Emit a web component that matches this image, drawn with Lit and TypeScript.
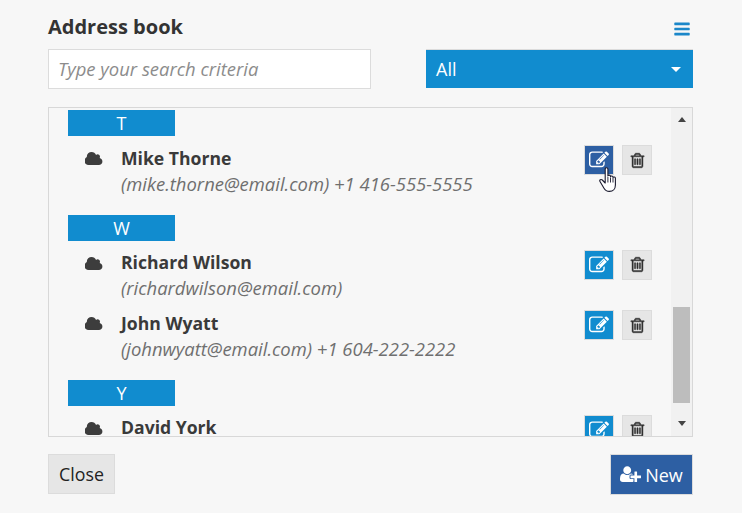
import { LitElement, html, css, svg } from "lit";
import { customElement } from "lit/decorators.js";

const icon = (vb: string, d: string, cls: string) =>
  html`<svg class=${cls} viewBox=${vb} aria-hidden="true">${svg`<path fill="currentColor" d=${d}></path>`}</svg>`;

const CLOUD = "M1856 1216q0 159-112.5 271.5t-271.5 112.5h-1088q-185 0-316.5-131.5t-131.5-316.5q0-132 71-241.5t187-163.5q-2-28-2-43 0-212 150-362t362-150q158 0 286.5 88t187.5 230q70-62 166-62 106 0 181 75t75 181q0 75-41 138 129 30 213 134.5t84 239.5z";
const BARS = "M1664 1344v128q0 26-19 45t-45 19h-1408q-26 0-45-19t-19-45v-128q0-26 19-45t45-19h1408q26 0 45 19t19 45zm0-512v128q0 26-19 45t-45 19h-1408q-26 0-45-19t-19-45v-128q0-26 19-45t45-19h1408q26 0 45 19t19 45zm0-512v128q0 26-19 45t-45 19h-1408q-26 0-45-19t-19-45v-128q0-26 19-45t45-19h1408q26 0 45 19t19 45z";
const EDIT = "M888 1184l116-116-152-152-116 116v56h96v96h56zm440-720q-16-16-33 1l-350 350q-17 17-1 33t33-1l350-350q17-17 1-33zm80 594v190q0 119-84.5 203.5t-203.5 84.5h-832q-119 0-203.5-84.5t-84.5-203.5v-832q0-119 84.5-203.5t203.5-84.5h832q63 0 117 25 15 7 18 23 3 17-9 29l-49 49q-14 14-32 8-23-6-45-6h-832q-66 0-113 47t-47 113v832q0 66 47 113t113 47h832q66 0 113-47t47-113v-126q0-13 9-22l64-64q15-15 35-7t20 29zm-96-738l288 288-672 672h-288v-288zm444 132l-92 92-288-288 92-92q28-28 68-28t68 28l152 152q28 28 28 68t-28 68z";
const TRASH = "M704 736v576q0 14-9 23t-23 9h-64q-14 0-23-9t-9-23v-576q0-14 9-23t23-9h64q14 0 23 9t9 23zm256 0v576q0 14-9 23t-23 9h-64q-14 0-23-9t-9-23v-576q0-14 9-23t23-9h64q14 0 23 9t9 23zm256 0v576q0 14-9 23t-23 9h-64q-14 0-23-9t-9-23v-576q0-14 9-23t23-9h64q14 0 23 9t9 23zm128 724v-948h-896v948q0 22 7 40.5t14.5 27 10.5 8.5h832q3 0 10.5-8.5t14.5-27 7-40.5zm-672-1076h448l-48-117q-7-9-17-11h-317q-10 2-17 11zm928 32v64q0 14-9 23t-23 9h-96v948q0 83-47 143.5t-113 60.5h-832q-66 0-113-58.5t-47-141.5v-952h-96q-14 0-23-9t-9-23v-64q0-14 9-23t23-9h309l70-167q15-37 54-63t79-26h320q40 0 79 26t54 63l70 167h309q14 0 23 9t9 23z";
const USERPLUS = "M704 896q-159 0-271.5-112.5t-112.5-271.5 112.5-271.5 271.5-112.5 271.5 112.5 112.5 271.5-112.5 271.5-271.5 112.5zm960 128h352q13 0 22.5 9.5t9.5 22.5v192q0 13-9.5 22.5t-22.5 9.5h-352v352q0 13-9.5 22.5t-22.5 9.5h-192q-13 0-22.5-9.5t-9.5-22.5v-352h-352q-13 0-22.5-9.5t-9.5-22.5v-192q0-13 9.5-22.5t22.5-9.5h352v-352q0-13 9.5-22.5t22.5-9.5h192q13 0 22.5 9.5t9.5 22.5v352zm-736 224q0 52 38 90t90 38h256v238q-68 50-171 50h-874q-121 0-194-69t-73-190q0-53 3.5-103.5t14-109 26.5-108.5 43-97.5 62-81 85.5-53.5 111.5-20q19 0 39 17 79 61 154.5 91.5t164.5 30.5 164.5-30.5 154.5-91.5q20-17 39-17 132 0 217 96h-223q-52 0-90 38t-38 90v192z";

type Contact = { name: string; detail: string; hover?: boolean };
const GROUPS: { letter: string; contacts: Contact[] }[] = [
  { letter: "T", contacts: [{ name: "Mike Thorne", detail: "(mike.thorne@email.com) +1 416-555-5555", hover: true }] },
  { letter: "W", contacts: [
    { name: "Richard Wilson", detail: "(richardwilson@email.com)" },
    { name: "John Wyatt", detail: "(johnwyatt@email.com) +1 604-222-2222" },
  ] },
  { letter: "Y", contacts: [{ name: "David York", detail: "" }] },
];

@customElement("app-root")
export class AppRoot extends LitElement {
  static styles = css`
    :host {
      display: block;
      width: 742px;
      height: 513px;
      overflow: hidden;
      background: #f7f7f7;
      font-family: "Open Sans", sans-serif;
      color: #3a3a3a;
      box-sizing: border-box;
      padding: 14px 49px 0 48px;
    }
    .head { display: flex; justify-content: space-between; align-items: center; height: 26px; }
    h1 { margin: 0; font-size: 20px; font-weight: 700; line-height: 26px; color: #333; }
    .bars { width: 18px; height: 18px; color: #1b87c9; margin: 3px 2px 0 0; }
    .filters { display: flex; justify-content: space-between; margin-top: 9px; }
    .search {
      box-sizing: border-box; width: 323px; height: 40px;
      border: 1px solid #dcdcdc; background: #fff;
      padding: 0 9px 2px; display: flex; align-items: center;
      font-size: 18.45px; font-style: italic; color: #8c8c8c;
    }
    .select {
      box-sizing: border-box; width: 267px; height: 39px;
      background: #118ccf; color: #fff; border-top: 1px solid #dcdcdc;
      padding: 0 12px 0 10px; display: flex; align-items: center; justify-content: space-between;
      font-size: 18px;
    }
    .caret { width: 0; height: 0; border-left: 5px solid transparent; border-right: 5px solid transparent; border-top: 5px solid #fff; }
    .box {
      box-sizing: border-box; margin-top: 18px; height: 330px;
      border: 1px solid #d8d8d8; display: flex; overflow: hidden;
    }
    .list { flex: 1; min-width: 0; padding: 2px 19px 0 19px; overflow: hidden; }
    .letter {
      width: 107px; height: 26px; background: #118ccf; color: #fff;
      font-size: 18px; line-height: 26px; text-align: center; margin-bottom: 9px;
    }
    .group { margin-bottom: 9px; }
    .row { display: flex; height: 60.5px; }
    .cloud { width: 18px; height: 17px; color: #3d3d3d; margin: 5px 0 0 17px; flex: none; }
    .info { flex: 1; margin: -0.3px 0 0 18px; min-width: 0; }
    .name { font-size: 17.6px; font-weight: 700; line-height: 26px; color: #3a3a3a; }
    .detail { font-size: 18.45px; font-style: italic; line-height: 26px; color: #6f6f6f; white-space: nowrap; }
    .actions { display: flex; gap: 8px; flex: none; position: relative; align-self: flex-start; }
    .btn {
      box-sizing: border-box; width: 30px; height: 30px; display: flex; align-items: center; justify-content: center;
      border: 1px solid #dcdcdc;
    }
    .edit { background: #118ccf; color: #fff; }
    .edit.hover { background: #2d5fa3; }
    .del { background: #e6e6e6; color: #2e2e2e; }
    .ico { width: 20px; height: 20px; }
    .ico-d { width: 17px; height: 17px; stroke: #2e2e2e; stroke-width: 45; }
    .cursor { position: absolute; left: 15px; top: 22px; width: 18px; height: 25px; }
    .scroll { width: 21px; background: #f1f1f1; flex: none; display: flex; flex-direction: column; align-items: center; }
    .arrow { height: 199px; flex: none; display: flex; justify-content: center; }
    .up { width: 0; height: 0; margin-top: 9px; border-left: 4.5px solid transparent; border-right: 4.5px solid transparent; border-bottom: 5px solid #444; }
    .thumb { width: 17px; height: 96px; background: #bdbdbd; flex: none; }
    .dn { width: 0; height: 0; margin-top: 18px; border-left: 4.5px solid transparent; border-right: 4.5px solid transparent; border-top: 5px solid #444; }
    .foot { display: flex; justify-content: space-between; margin-top: 17px; }
    .close {
      box-sizing: border-box; width: 67px; height: 40px; border: 1px solid #dcdcdc; background: #e6e6e6;
      color: #222; font-size: 17.8px; display: flex; align-items: center; justify-content: center;
    }
    .new {
      box-sizing: border-box; width: 83px; height: 41px; border: 1px solid #dcdcdc; background: #2d5fa3;
      color: #fff; font-size: 18px; display: flex; align-items: center; justify-content: center; gap: 4px;
    }
    .up-ico { width: 21px; height: 18.4px; }
  `;

  private row(c: Contact) {
    return html`<div class="row">
      ${icon("0 0 1920 1792", CLOUD, "cloud")}
      <div class="info">
        <div class="name">${c.name}</div>
        <div class="detail">${c.detail}</div>
      </div>
      <div class="actions">
        <div class="btn edit ${c.hover ? "hover" : ""}">${icon("0 0 1792 1792", EDIT, "ico")}</div>
        <div class="btn del">${icon("0 0 1792 1792", TRASH, "ico-d")}</div>
        ${c.hover
          ? html`<svg class="cursor" viewBox="0 0 18 25" aria-hidden="true">
              <path fill="#fff" stroke="#1a1a2e" stroke-width="1.1" stroke-linejoin="round"
                d="M6.200 2c0-1.700 2.700-1.700 2.700 0v7c.2-1.200 2.500-1.200 2.600.1v.6c.3-1.100 2.400-1 2.500.3v.6c.4-1 2.400-.8 2.400.7v6.700c0 3.600-2.300 6.400-6 6.400-3.200 0-4.400-1.400-5.400-3.200L1 14.500c-.9-1.500 1-2.700 2.300-1.500l2.900 3z"></path>
              <path fill="none" stroke="#1a1a2e" stroke-width=".9" d="M8.900 10v5.500M11.500 10.500v5M14 11v4.500"></path>
            </svg>`
          : ""}
      </div>
    </div>`;
  }

  render() {
    return html`
      <div class="head"><h1>Address book</h1>${icon("0 0 1792 1792", BARS, "bars")}</div>
      <div class="filters">
        <div class="search">Type your search criteria</div>
        <div class="select"><span>All</span><span class="caret"></span></div>
      </div>
      <div class="box">
        <div class="list">
          ${GROUPS.map((g) => html`<div class="group">
            <div class="letter">${g.letter}</div>
            ${g.contacts.map((c) => this.row(c))}
          </div>`)}
        </div>
        <div class="scroll">
          <div class="arrow"><div class="up"></div></div>
          <div class="thumb"></div>
          <div class="arrow"><div class="dn"></div></div>
        </div>
      </div>
      <div class="foot">
        <div class="close">Close</div>
        <div class="new">${icon("0 0 2048 1792", USERPLUS, "up-ico")}<span>New</span></div>
      </div>
    `;
  }
}
